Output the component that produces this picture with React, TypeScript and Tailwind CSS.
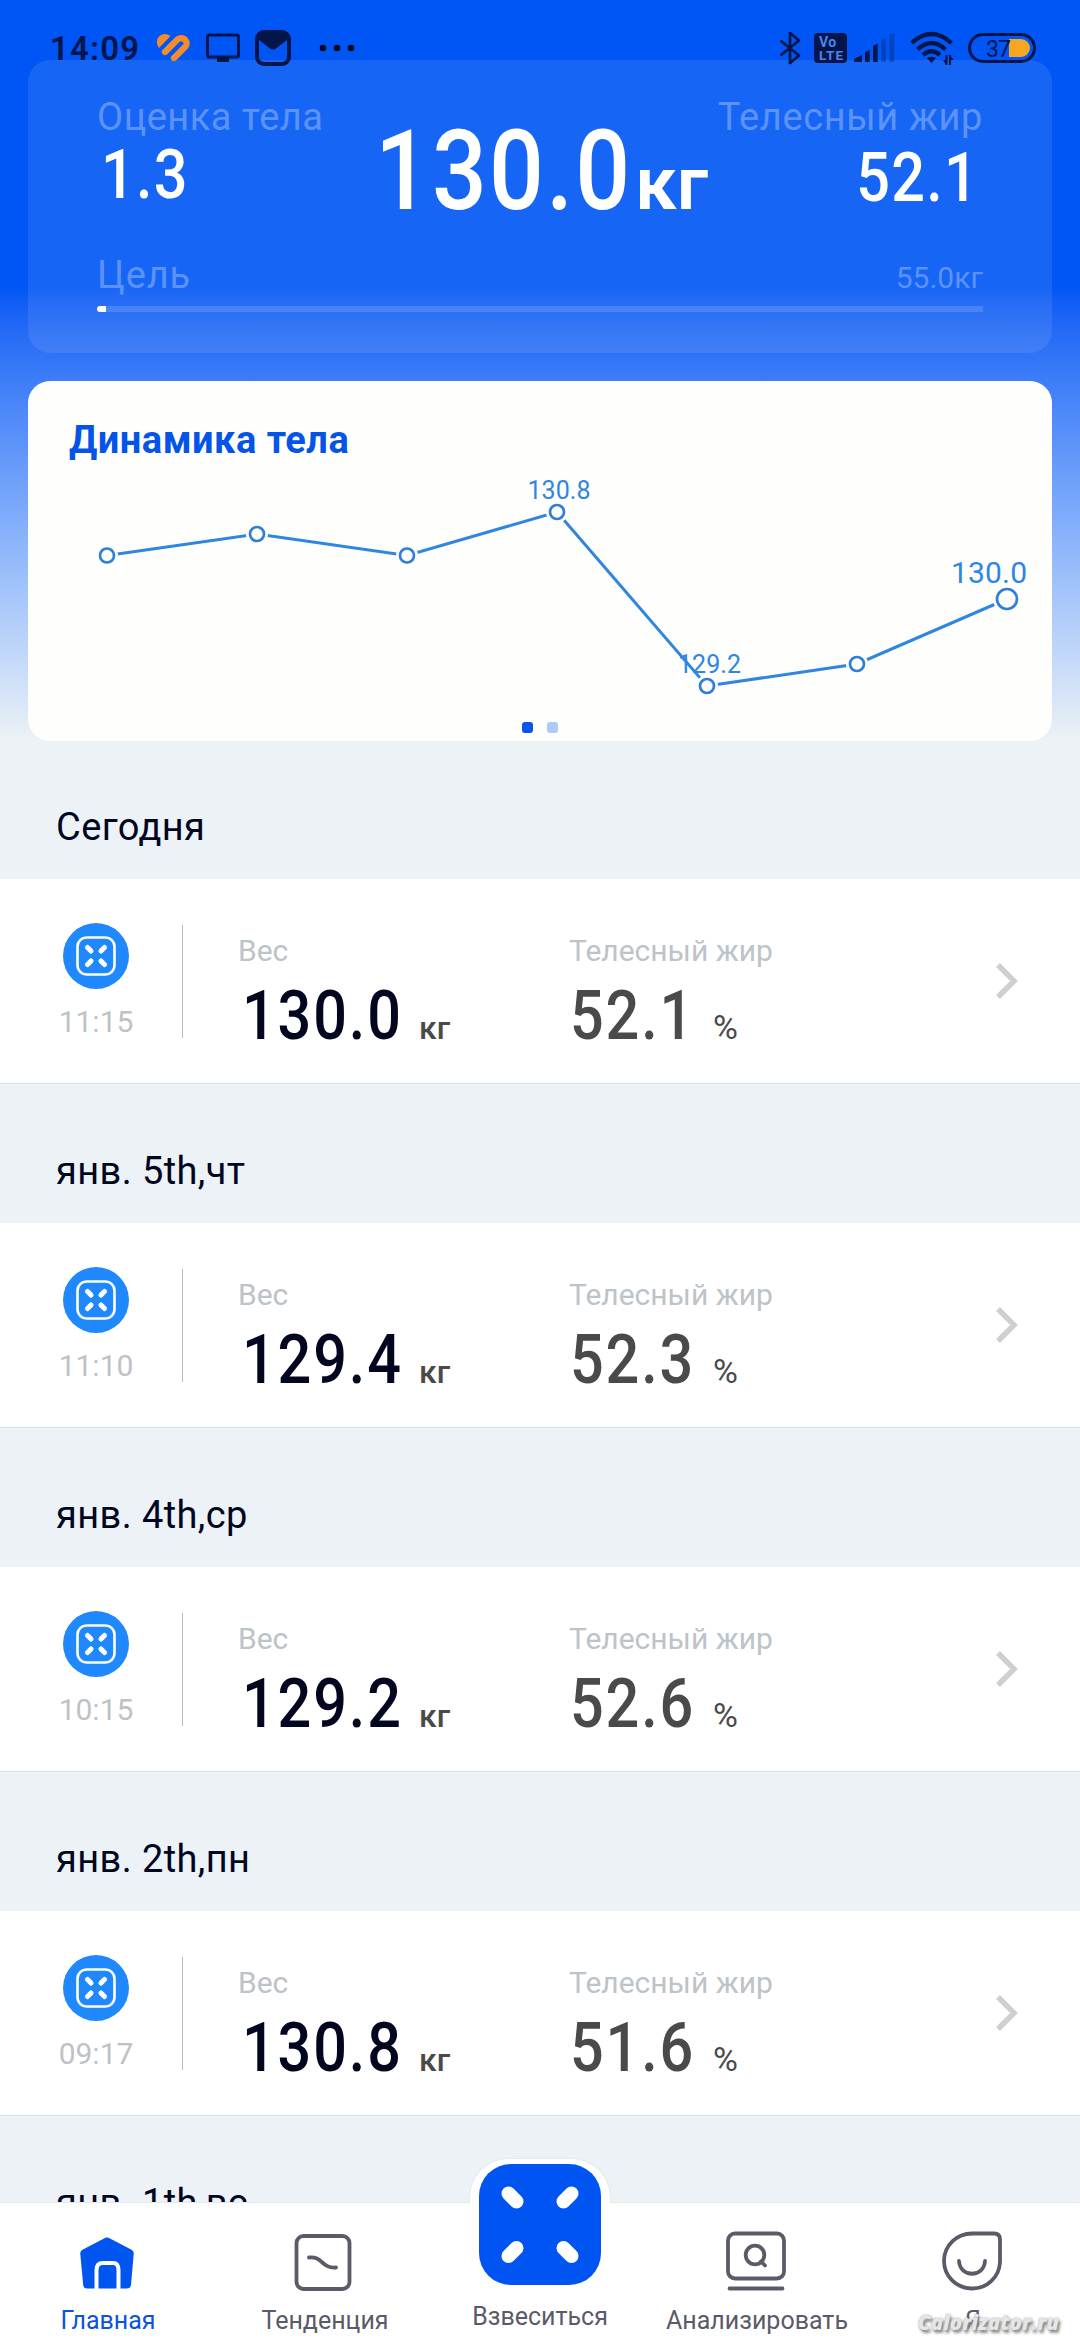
import React from 'react';

interface Measurement {
  title: string;
  time: string;
  weight: string;
  fat: string;
}

const measurements: Measurement[] = [
  { title: 'Сегодня', time: '11:15', weight: '130.0', fat: '52.1' },
  { title: 'янв. 5th,чт', time: '11:10', weight: '129.4', fat: '52.3' },
  { title: 'янв. 4th,ср', time: '10:15', weight: '129.2', fat: '52.6' },
  { title: 'янв. 2th,пн', time: '09:17', weight: '130.8', fat: '51.6' },
];

const points = [
  { x: 79, y: 174.5 },
  { x: 229, y: 153 },
  { x: 379, y: 174.5 },
  { x: 529, y: 131 },
  { x: 679, y: 305 },
  { x: 829, y: 283 },
  { x: 979, y: 218 },
];

const StatusBar: React.FC = () => (
  <div className="absolute top-0 left-0 z-10 flex h-[96px] w-full items-center text-[#03154a]">
    <span className="ml-[50px] w-[92px] text-[33px] leading-none font-semibold tracking-[1.2px] whitespace-nowrap">14:09</span>
    <svg className="ml-[14px]" width="35" height="30" viewBox="0 0 35 30" fill="none">
      <path d="M0.800 9 A8 8 0 0 1 8.500 1 Q12 1 14.500 3 L3 15 Q1 12.500 0.800 9 Z" fill="#f58c2c" />
      <path d="M9 19 L20 8 C24.500 1.500 34 7.500 29.500 13.500 L18 25" stroke="#f58c2c" strokeWidth="6.300" strokeLinecap="round" />
    </svg>
    <svg className="ml-[15px]" width="35" height="30" viewBox="0 0 35 30">
      <rect x="1.500" y="2" width="31" height="22" rx="2" fill="none" stroke="currentColor" strokeWidth="3" />
      <rect x="11" y="24" width="12" height="5" fill="currentColor" />
    </svg>
    <svg className="ml-[14px]" width="36" height="36" viewBox="0 0 36 36">
      <rect x="2" y="2" width="32" height="32" rx="7" fill="none" stroke="currentColor" strokeWidth="4" />
      <path d="M4 3 H32 V10 L21 18.500 Q18 20.500 15 18.500 L4 10 Z" fill="currentColor" />
    </svg>
    <svg className="ml-[28px]" width="36" height="8" viewBox="0 0 36 8" fill="#020a20">
      <circle cx="4" cy="4" r="3.300" />
      <circle cx="18" cy="4" r="3.300" />
      <circle cx="32" cy="4" r="3.300" />
    </svg>

    <div className="ml-auto flex items-center pr-[44px]">
      <svg width="22" height="34" viewBox="0 0 22 34" fill="none" stroke="currentColor" strokeWidth="2.700" strokeLinejoin="round">
        <path d="M1.500 9.500 L20 24.500 L11 32 V2 L20 9.500 L1.500 24.500" />
      </svg>
      <svg className="ml-[13px]" width="34" height="30" viewBox="0 0 34 30">
        <rect width="33" height="30" rx="4" fill="currentColor" />
        <text x="5" y="13.500" fontSize="14" fontWeight="700" fill="#4f82ea" letterSpacing="0.5">Vo</text>
        <text x="5" y="26.500" fontSize="13.500" fontWeight="700" fill="#4f82ea" textLength="24">LTE</text>
      </svg>
      <svg className="ml-[6px]" width="41" height="30" viewBox="0 0 41 30" fill="currentColor">
        <path d="M0 29 V26 L8 22 V29 Z" />
        <path d="M11 19 L15.700 17 V29 H11 Z" />
        <path d="M19 13 L23.700 10.500 V29 H19 Z" />
        <path d="M27.200 7 L31.900 5 V29 H27.200 Z" opacity="0.3" />
        <path d="M35.500 2 L40.200 0 V29 H35.500 Z" opacity="0.3" />
      </svg>
      <svg className="ml-[15px]" width="44" height="36" viewBox="0 0 44 36" fill="none" stroke="currentColor" strokeWidth="4.200">
        <path d="M1.500 13 Q21.500 -5 41.500 13" />
        <path d="M7.500 19.500 Q21.500 6.500 35.500 19.500" />
        <path d="M13 25 Q21.500 17.500 30 25" />
        <path d="M17 28 Q21.500 25.500 26 28 L21.500 33 Z" fill="currentColor" stroke="none" />
        <path d="M36.500 35 V25 M40 25 V35" strokeWidth="2" />
        <path d="M33 30 H36.500 V35 Z M43.500 30 H40 V25 Z" fill="currentColor" stroke="none" />
      </svg>
      <svg className="ml-[14px]" width="68" height="30" viewBox="0 0 68 30">
        <rect x="1.500" y="1.500" width="65" height="27" rx="13.500" fill="none" stroke="currentColor" strokeWidth="3" />
        <path d="M41 6 H53 A9 9 0 0 1 53 24 H41 Z" fill="#f5a623" />
        <text x="18" y="23.500" fontSize="23" fill="currentColor" textLength="25">37</text>
      </svg>
    </div>
  </div>
);

const SummaryPanel: React.FC = () => (
  <div className="mx-[28px] h-[293px] rounded-[22px] bg-white/9 pr-[69px] pl-[69px]">
    <div className="flex h-[196px] justify-between">
      <div className="w-[250px] pt-[38px] whitespace-nowrap">
        <p className="text-[38px] leading-none tracking-[0.5px] text-[#5b93fa]">Оценка тела</p>
        <p className="mt-[4px] ml-[4px] origin-left scale-x-86 text-[69px] leading-none font-medium tracking-[1.5px] text-white">1.3</p>
      </div>
      <div className="flex w-[360px] items-baseline pt-[56px] pl-[25px] whitespace-nowrap text-white">
        <span className="inline-block w-[260px] shrink-0 origin-left scale-x-87 text-[111px] leading-none font-medium tracking-[2.5px]">130.0</span>
        <span className="text-[75px] leading-none font-semibold">кг</span>
      </div>
      <div className="w-[270px] pt-[38px] text-right whitespace-nowrap">
        <p className="text-[38px] leading-none tracking-[0.6px] text-[#5b93fa]">Телесный жир</p>
        <p className="mt-[7px] mr-[4px] origin-right scale-x-86 text-[69px] leading-none font-medium tracking-[1.5px] text-white">52.1</p>
      </div>
    </div>
    <div className="flex h-[38px] items-baseline justify-between text-[#5b93fa]">
      <span className="text-[38px] leading-none tracking-[0.9px]">Цель</span>
      <span className="text-[30px] leading-none">55.0кг</span>
    </div>
    <div className="mt-[12px] h-[6px] w-[886px] rounded-l-full bg-white/14">
      <div className="h-full w-[9px] rounded-l-full bg-white" />
    </div>
  </div>
);

const TrendCard: React.FC = () => (
  <div className="relative mx-[28px] mt-[28px] h-[360px] overflow-hidden rounded-[22px] bg-[#fefefd]">
    <h2 className="absolute top-[40px] left-[41px] text-[38px] leading-none font-bold tracking-[0.5px] text-[#0454e8]">Динамика тела</h2>
    <svg width="1024" height="359" viewBox="0 0 1024 359" fill="none">
      <g fill="#2f86df" textAnchor="middle">
        <text x="531" y="118" fontSize="25" textLength="63">130.8</text>
        <text x="681.500" y="292" fontSize="25" textLength="63">129.2</text>
        <text x="961" y="202" fontSize="30" textLength="76">130.0</text>
      </g>
      <polyline points={points.map((p) => `${p.x},${p.y}`).join(' ')} stroke="#2f86df" strokeWidth="3" />
      {points.map((p, i) => {
        const last = i === points.length - 1;
        return (
          <g key={p.x}>
            <circle cx={p.x} cy={p.y} r={last ? 14 : 11} fill="#fefefd" />
            <circle cx={p.x} cy={p.y} r={last ? 10 : 7} stroke="#2f7fd8" strokeWidth="2.700" />
          </g>
        );
      })}
    </svg>
    <div className="absolute bottom-[8px] left-[494px] flex gap-[14px]">
      <span className="h-[11px] w-[11px] rounded-[3px] bg-[#0a53e8]" />
      <span className="h-[11px] w-[11px] rounded-[3px] bg-[#aecaf9]" />
    </div>
  </div>
);

const ScaleIcon: React.FC = () => (
  <svg width="66" height="66" viewBox="0 0 66 66" fill="none" stroke="#ffffff">
    <circle cx="33" cy="33" r="33" fill="#1e88fc" stroke="none" />
    <rect x="14.500" y="14.500" width="37" height="37" rx="9" strokeWidth="2.600" />
    <path d="M24.500 24.500 L28 28 M41.500 24.500 L38 28 M24.500 41.500 L28 38 M41.500 41.500 L38 38" strokeWidth="5" strokeLinecap="round" />
  </svg>
);

const SectionTitle: React.FC<{ title: string }> = ({ title }) => (
  <h3 className="h-[139px] pt-[68px] pl-[56px] text-[38px] leading-none tracking-[0.4px] whitespace-nowrap text-[#02061f]">{title}</h3>
);

const MeasurementRow: React.FC<{ item: Measurement }> = ({ item }) => (
  <div className="flex h-[205px] border-b border-[#dbe3ea] bg-white whitespace-nowrap">
    <div className="ml-[63px] flex w-[66px] flex-col items-center pt-[44px]">
      <ScaleIcon />
      <span className="mt-[18px] text-[30px] leading-none text-[#bdc2c6]">{item.time}</span>
    </div>
    <div className="mt-[46px] ml-[53px] h-[113px] w-px bg-[#b9bcbf]" />
    <div className="w-[386px] pt-[57px] pl-[55px]">
      <p className="text-[30px] leading-none text-[#bcc3c9]">Вес</p>
      <div className="mt-[15px] flex items-baseline">
        <span className="ml-[4px] inline-block w-[177px] origin-left scale-x-86 text-[69px] leading-none font-medium tracking-[2.2px] text-[#02061f]">{item.weight}</span>
        <span className="text-[32px] leading-none font-medium text-[#4a4a4a]">кг</span>
      </div>
    </div>
    <div className="pt-[57px]">
      <p className="text-[30px] leading-none text-[#bcc3c9]">Телесный жир</p>
      <div className="mt-[15px] flex items-baseline">
        <span className="ml-px inline-block w-[143px] origin-left scale-x-86 text-[69px] leading-none font-medium tracking-[2.2px] text-[#4a4a4a]">{item.fat}</span>
        <span className="text-[34px] leading-none text-[#4a4a4a]">%</span>
      </div>
    </div>
    <svg className="mt-[82px] mr-[61px] ml-auto" width="24" height="40" viewBox="0 0 24 40" fill="none" stroke="#cfcfcf" strokeWidth="5.500">
      <path d="M3 4 L19 20 L3 36" />
    </svg>
  </div>
);

interface NavItemProps {
  label: string;
  active?: boolean;
  children: React.ReactNode;
}

const NavItem: React.FC<NavItemProps> = ({ label, active, children }) => (
  <button className={`flex w-[216px] flex-col items-center pt-[27px] ${active ? 'pr-[2px] text-[#0a53e0]' : 'text-[#5b5a68]'}`}>
    {children}
    <span className="mt-[14px] ml-[2px] text-[25px] leading-none whitespace-nowrap">{label}</span>
  </button>
);

const BottomNav: React.FC = () => (
  <nav className="absolute bottom-0 left-0 flex h-[138px] w-full border-t border-[#e3e9ee] bg-white">
    <NavItem label="Главная" active>
      <svg width="64" height="64" viewBox="0 0 64 64">
        <path d="M29 8.500 Q32 6.500 35 8.500 L57 20 Q59 21.500 58.700 24 L56 55 Q55.500 58.500 52 58.500 H12 Q8.500 58.500 8.200 55 L5.300 24 Q5 21.500 7 20 Z" fill="#0055f0" />
        <path d="M21.500 59 V40 Q21.500 33 28 33 H38 Q43.500 33 43.500 40 V59" fill="none" stroke="#ffffff" strokeWidth="4" />
      </svg>
    </NavItem>
    <NavItem label="Тенденция">
      <svg width="64" height="64" viewBox="0 0 64 64" fill="none" stroke="currentColor" strokeWidth="3.800" strokeLinecap="round">
        <rect x="4.500" y="6" width="53" height="53" rx="7" />
        <path d="M17 27.500 C31 26 29 38.500 44 37.500" />
      </svg>
    </NavItem>
    <div className="relative w-[216px]">
      <div className="absolute top-[-44px] left-[38px] h-[140px] w-[140px] rounded-[38px] bg-white shadow-[0_0_2px_rgba(0,30,60,0.12)]" />
      {/* hides the lower half of the plate's shadow */}
      <div className="absolute top-0 left-0 h-full w-full bg-white" />
      <div className="relative mt-[-1px] flex flex-col items-center text-[#5b5a68]">
        <svg className="mt-[-38px]" width="122" height="122" viewBox="0 0 122 122">
          <rect width="122" height="121" rx="32" fill="#0055f2" />
          <path d="M29.500 29.500 L37.500 37.500 M92.500 29.500 L84.500 37.500 M29.500 92 L37.500 84 M92.500 92 L84.500 84" stroke="#ffffff" strokeWidth="14" strokeLinecap="round" />
        </svg>
        <span className="mt-[18px] text-[25px] leading-none">Взвеситься</span>
      </div>
    </div>
    <NavItem label="Анализировать">
      <svg width="64" height="64" viewBox="0 0 64 64" fill="none" stroke="currentColor" strokeWidth="3.800" strokeLinecap="round">
        <rect x="4" y="3.500" width="56" height="45" rx="7" />
        <circle cx="31" cy="25" r="9.300" />
        <path d="M37 31.500 L41 35.500 M5.500 58.500 H58.500" />
      </svg>
    </NavItem>
    <NavItem label="Я">
      <svg width="64" height="64" viewBox="0 0 64 64" fill="none" stroke="currentColor" strokeWidth="3.800" strokeLinecap="round">
        <path d="M32 3.500 H54 Q60 3.500 60 9.500 V32 A28 27.500 0 1 1 32 3.500 Z" />
        <path d="M19 31 C20 48 44 48 45 31" />
      </svg>
    </NavItem>
    <span className="absolute right-[21px] bottom-[8px] font-['Open_Sans'] text-[20.5px] leading-none font-extrabold text-[#e6e6e6] italic [text-shadow:2px_3px_3px_#888,0_0_2px_#999]">
      Calorizator.ru
    </span>
  </nav>
);

const App: React.FC = () => {
  return (
    <div className="relative h-[2340px] w-[1080px] overflow-hidden bg-[#ecf2f6] font-[Roboto,sans-serif]">
      <StatusBar />
      <header className="h-[740px] bg-linear-to-b from-[#0056f4] from-[285px] to-[#ecf2f6] pt-[60px]">
        <SummaryPanel />
        <TrendCard />
      </header>
      <main>
        {measurements.map((item) => (
          <section key={item.title}>
            <SectionTitle title={item.title} />
            <MeasurementRow item={item} />
          </section>
        ))}
        <SectionTitle title="янв. 1th,вс" />
      </main>
      <BottomNav />
    </div>
  );
};

export default App;
